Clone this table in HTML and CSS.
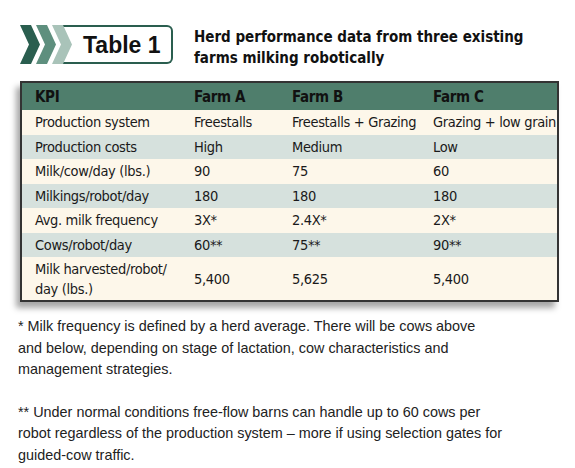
FILE: index.html
```html
<!DOCTYPE html>
<html lang="en">
<head>
    <meta charset="UTF-8">
    <meta name="viewport" content="width=device-width, initial-scale=1.0">
    <title>Table 1 - Herd performance data</title>
    <link rel="stylesheet" href="styles.css">
</head>
<body>
    <div class="page">
        <div class="header">
            <div class="badge">
                <svg class="chevrons" width="52" height="39" viewBox="0 0 52 39">
                    <polygon points="32,0 43,0 52,19.5 43,39 32,39 41,19.5" fill="#a9c3b9"/>
                    <polygon points="16,0 27,0 36,19.5 27,39 16,39 25,19.5" fill="#5e8f7e"/>
                    <polygon points="0,0 11,0 20,19.5 11,39 0,39 9,19.5" fill="#2a5e4f"/>
                </svg>
                <div class="badge-box">Table 1</div>
            </div>
            <h1>Herd performance data from three existing farms milking robotically</h1>
        </div>

        <table class="kpi-table">
            <colgroup>
                <col class="c1">
                <col class="c2">
                <col class="c3">
                <col class="c4">
            </colgroup>
            <thead>
                <tr>
                    <th>KPI</th>
                    <th>Farm A</th>
                    <th>Farm B</th>
                    <th>Farm C</th>
                </tr>
            </thead>
            <tbody>
                <tr>
                    <td>Production system</td>
                    <td>Freestalls</td>
                    <td>Freestalls + Grazing</td>
                    <td>Grazing + low grain</td>
                </tr>
                <tr>
                    <td>Production costs</td>
                    <td>High</td>
                    <td>Medium</td>
                    <td>Low</td>
                </tr>
                <tr>
                    <td>Milk/cow/day (lbs.)</td>
                    <td>90</td>
                    <td>75</td>
                    <td>60</td>
                </tr>
                <tr>
                    <td>Milkings/robot/day</td>
                    <td>180</td>
                    <td>180</td>
                    <td>180</td>
                </tr>
                <tr>
                    <td>Avg. milk frequency</td>
                    <td>3X*</td>
                    <td>2.4X*</td>
                    <td>2X*</td>
                </tr>
                <tr>
                    <td>Cows/robot/day</td>
                    <td>60**</td>
                    <td>75**</td>
                    <td>90**</td>
                </tr>
                <tr class="tall">
                    <td>Milk harvested/robot/<br>day (lbs.)</td>
                    <td>5,400</td>
                    <td>5,625</td>
                    <td>5,400</td>
                </tr>
            </tbody>
        </table>

        <div class="notes">
            <p>* Milk frequency is defined by a herd average. There will be cows above<br>
               and below, depending on stage of lactation, cow characteristics and<br>
               management strategies.</p>
            <p>** Under normal conditions free-flow barns can handle up to 60 cows per<br>
               robot regardless of the production system &ndash; more if using selection gates for<br>
               guided-cow traffic.</p>
        </div>
    </div>
</body>
</html>
```

FILE: styles.css
```css
body {
    margin: 0;
    background-color: #fff;
    color: #1a1a1a;
    font-family: "Liberation Sans", Arial, sans-serif;
}

.page {
    width: 575px;
    padding: 25px 0 0 0;
}

.header {
    display: flex;
    align-items: flex-start;
    padding-left: 20px;
}

.badge {
    display: flex;
    height: 39px;
}

.chevrons {
    flex: none;
    width: 52px;
    height: 39px;
    position: relative;
    z-index: 1;
}

.badge-box {
    margin-left: -12px;
    width: 88px;
    height: 35px;
    border: 2px solid #2a5e4f;
    border-left: none;
    border-radius: 0 6px 6px 0;
    padding-left: 23px;
    font-weight: bold;
    font-size: 23px;
    line-height: 36px;
    color: #111;
}

h1 {
    margin: 2px 0 0 21px;
    width: 350px;
    font-family: "DejaVu Sans Condensed", sans-serif;
    font-weight: bold;
    font-size: 15px;
    line-height: 21px;
    color: #111;
}

.kpi-table {
    margin: 12px 0 0 20px;
    width: 537px;
    table-layout: fixed;
    border-collapse: collapse;
    border: 2px solid #333;
    box-shadow: -4px 6px 6px rgba(0, 0, 0, 0.35);
    font-family: "DejaVu Sans Condensed", sans-serif;
    font-size: 14.5px;
    letter-spacing: -0.35px;
    color: #1a1a1a;
}

.c1 { width: 160px; }
.c2 { width: 98px; }
.c3 { width: 141px; }
.c4 { width: 138px; }

.kpi-table th,
.kpi-table td {
    text-align: left;
    padding: 0 0 0 13px;
    height: 24.5px;
    white-space: nowrap;
}

.kpi-table th {
    background-color: #4f7e6c;
    color: #111;
    font-weight: bold;
    font-size: 15px;
    height: 27px;
}

.kpi-table tbody tr:nth-child(odd) td {
    background-color: #fdf7ea;
}

.kpi-table tbody tr:nth-child(even) td {
    background-color: #d6e1dd;
}

.kpi-table tr.tall td {
    height: 43px;
    line-height: 20px;
}

.notes {
    padding: 14px 0 0 18px;
    width: 540px;
}

.notes p {
    margin: 0 0 21px 0;
    font-size: 14.4px;
    line-height: 21.5px;
    color: #222;
}
```
